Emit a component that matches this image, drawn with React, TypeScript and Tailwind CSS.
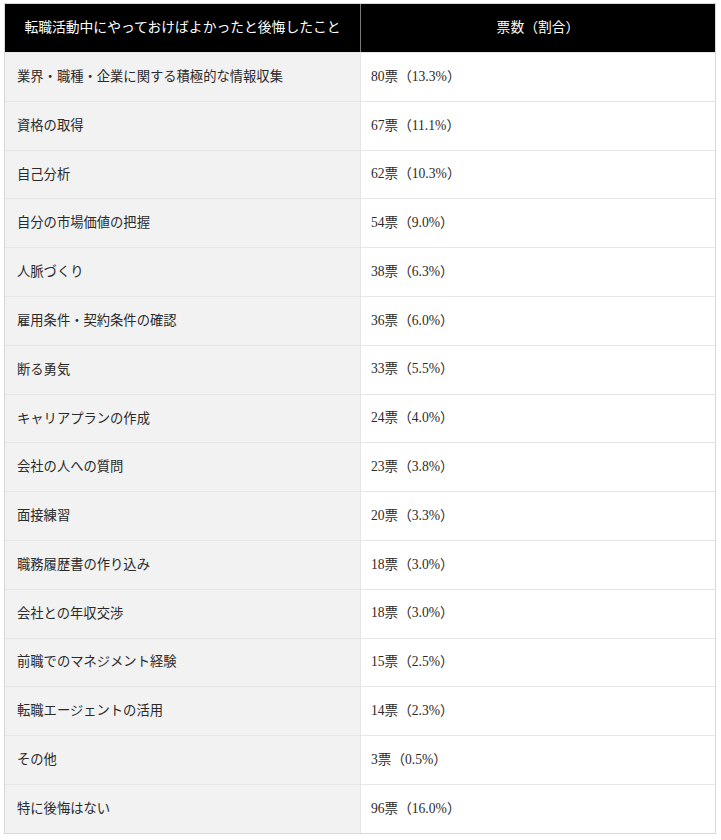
import React from "react";

const rows: [string, string][] = [
  ["業界・職種・企業に関する積極的な情報収集", "80票（13.3%）"],
  ["資格の取得", "67票（11.1%）"],
  ["自己分析", "62票（10.3%）"],
  ["自分の市場価値の把握", "54票（9.0%）"],
  ["人脈づくり", "38票（6.3%）"],
  ["雇用条件・契約条件の確認", "36票（6.0%）"],
  ["断る勇気", "33票（5.5%）"],
  ["キャリアプランの作成", "24票（4.0%）"],
  ["会社の人への質問", "23票（3.8%）"],
  ["面接練習", "20票（3.3%）"],
  ["職務履歴書の作り込み", "18票（3.0%）"],
  ["会社との年収交渉", "18票（3.0%）"],
  ["前職でのマネジメント経験", "15票（2.5%）"],
  ["転職エージェントの活用", "14票（2.3%）"],
  ["その他", "3票（0.5%）"],
  ["特に後悔はない", "96票（16.0%）"],
];

export default function App() {
  return (
    <div
      className="bg-white w-[721px] h-[840px] pt-[3px] px-[4px]"
      style={{ fontFamily: '"Liberation Serif", "Noto Sans CJK JP", serif' }}
    >
      <div className="w-[712px] border border-[#d8d8d8] flex flex-col">
        <div className="flex h-[48px] bg-black text-white text-[13.8px]">
          <div className="w-[356px] flex items-center justify-center border-r border-[#7a7a7a]">
            転職活動中にやっておけばよかったと後悔したこと
          </div>
          <div className="flex-1 flex items-center justify-center">票数（割合）</div>
        </div>
        {rows.map(([a, b], i) => (
          <div key={i} className="flex h-[48.8px] border-t border-[#e6e6e6] text-[13.3px] text-[#2a2a2a]">
            <div className="w-[356px] bg-[#f2f2f2] flex items-center px-3 border-r border-[#e6e6e6]">{a}</div>
            <div className="flex-1 flex items-center pr-3 pl-[10px] bg-white text-[13.6px]">{b}</div>
          </div>
        ))}
      </div>
    </div>
  );
}
